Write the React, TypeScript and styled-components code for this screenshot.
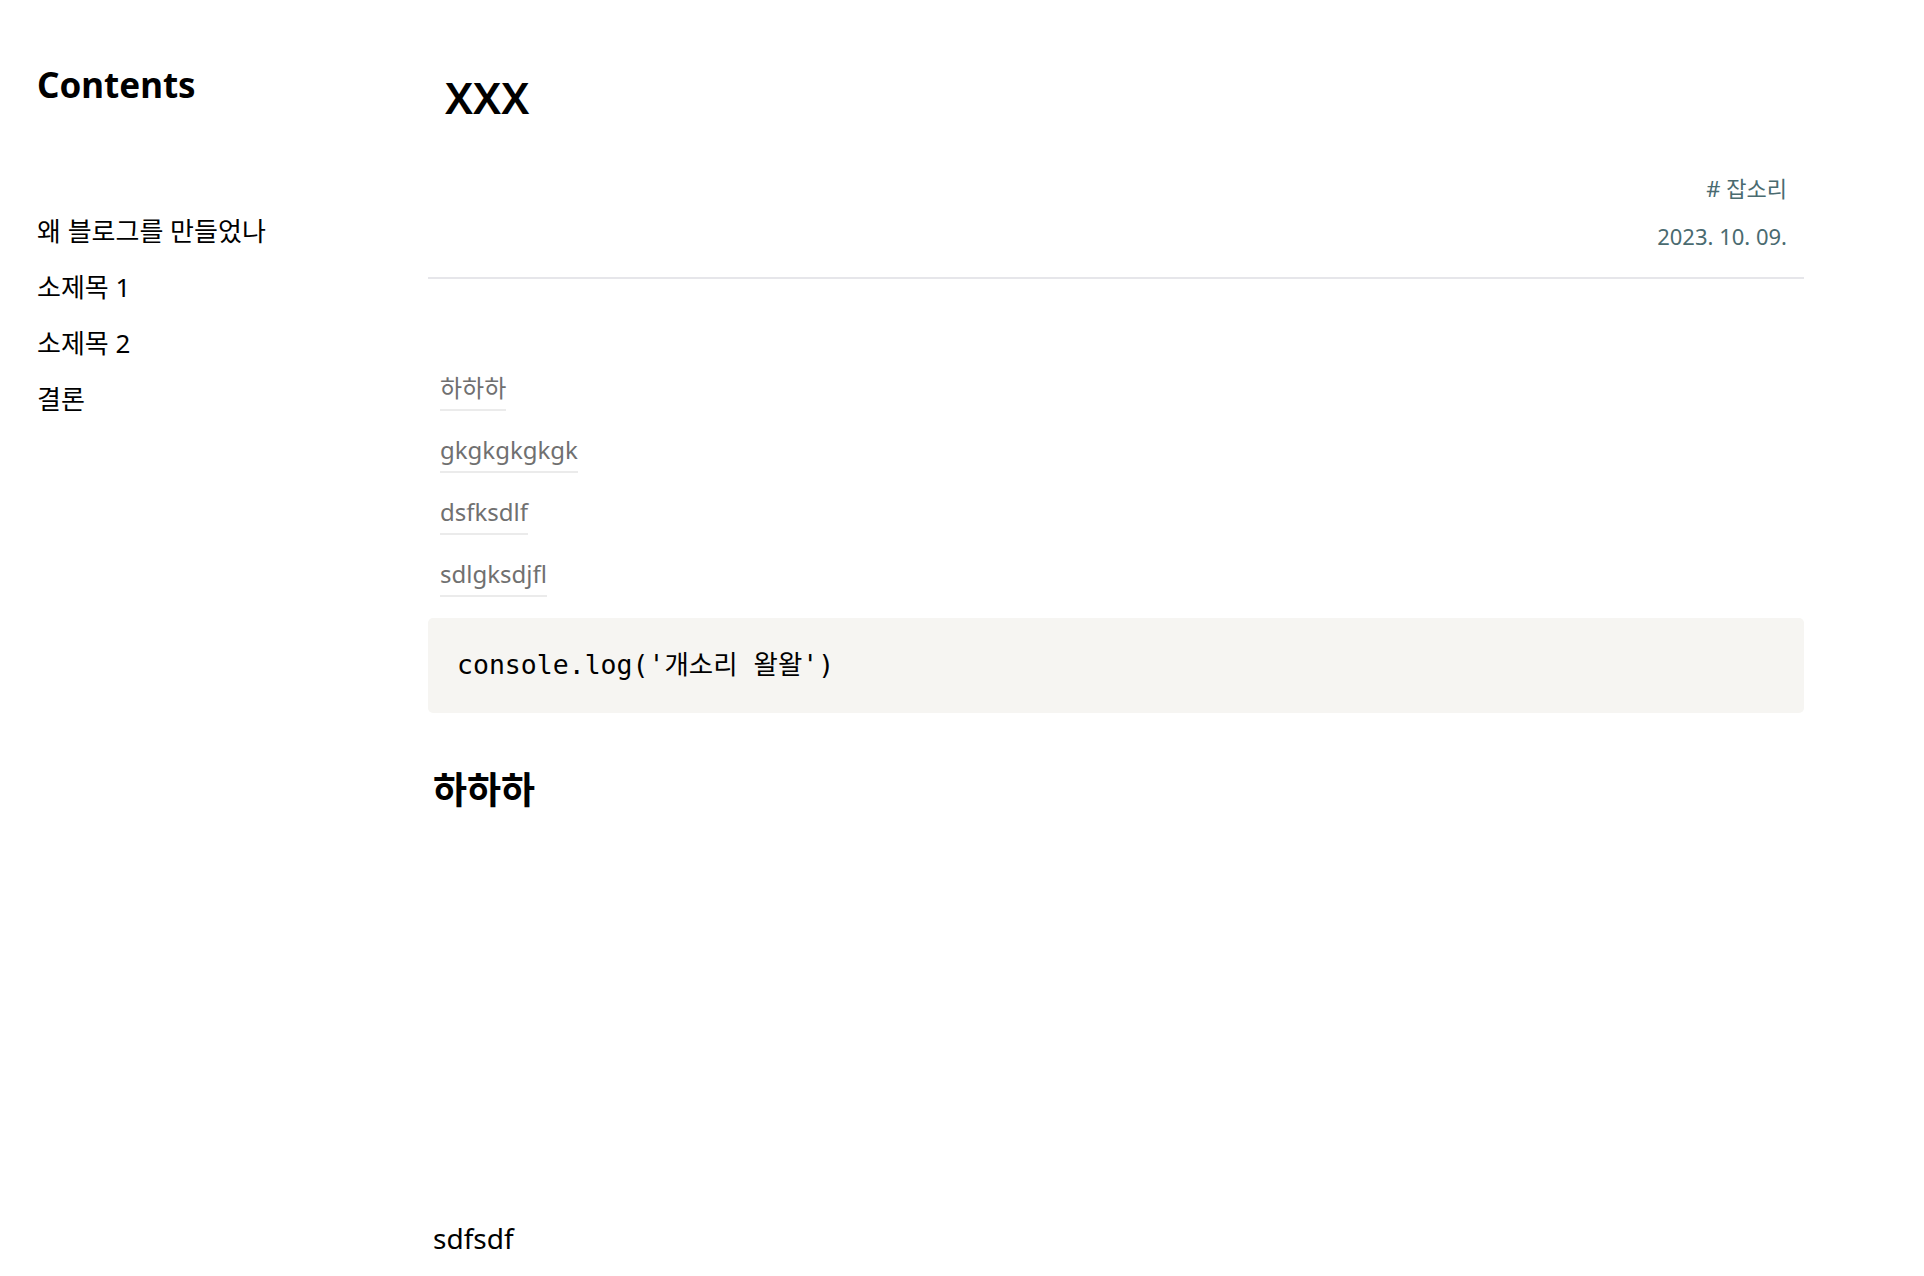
import React from "react";
import styled, { createGlobalStyle } from "styled-components";

const GlobalStyle = createGlobalStyle`
  html, body {
    margin: 0;
    padding: 0;
    background: #ffffff;
  }
  body {
    font-family: "Noto Sans", "Noto Sans CJK KR", sans-serif;
    color: #000000;
  }
  * { box-sizing: border-box; }
`;

const Page = styled.div`
  display: grid;
  grid-template-columns: 428px 1376px;
  min-height: 1276px;
`;

const Sidebar = styled.aside`
  padding: 61px 0 0 37px;
`;

const SidebarTitle = styled.h2`
  margin: 0;
  font-size: 35px;
  line-height: 48px;
  font-weight: 700;
`;

const TocList = styled.ul`
  list-style: none;
  margin: 94px 0 0;
  padding: 0;
`;

const TocItem = styled.li`
  font-size: 26px;
  line-height: 56px;
  color: #000;
`;

const Main = styled.main`
  padding-top: 71px;
`;

const Header = styled.header`
  padding: 0 17px 26px;
  border-bottom: 2px solid #e6e6ea;
`;

const Title = styled.h1`
  margin: 0;
  font-size: 44px;
  line-height: 53px;
  font-weight: 600;
`;

const Meta = styled.div`
  display: flex;
  flex-direction: column;
  align-items: flex-end;
  gap: 18px;
  margin-top: 49px;
  color: #4a6b70;
  font-size: 22px;
  line-height: 30px;
`;

const LinkList = styled.div`
  display: flex;
  flex-direction: column;
  align-items: flex-start;
  gap: 21px;
  margin-top: 91px;
  padding-left: 12px;
`;

const LinkItem = styled.span`
  display: inline-block;
  font-size: 24px;
  line-height: 36px;
  padding-bottom: 3px;
  color: #707070;
  border-bottom: 2px solid #ebebeb;
`;

const CodeBlock = styled.pre`
  margin: 21px 0 0;
  padding: 27px 29px 28px;
  background: #f6f5f2;
  border-radius: 5px;
  font-family: "DejaVu Sans Mono", "Noto Sans CJK KR", monospace;
  font-size: 26.5px;
  line-height: 40px;
  color: #000;
`;

const SectionHeading = styled.h2`
  margin: 53px 0 0;
  padding-left: 5px;
  font-size: 37px;
  line-height: 48px;
  font-weight: 700;
`;

const Paragraph = styled.p`
  margin: 404px 0 0;
  padding-left: 5px;
  font-size: 28px;
  line-height: 40px;
`;

const tocItems = ["왜 블로그를 만들었나", "소제목 1", "소제목 2", "결론"];
const links = ["하하하", "gkgkgkgkgk", "dsfksdlf", "sdlgksdjfl"];

export default function App() {
  return (
    <>
      <GlobalStyle />
      <Page>
        <Sidebar>
          <SidebarTitle>Contents</SidebarTitle>
          <TocList>
            {tocItems.map((t) => (
              <TocItem key={t}>{t}</TocItem>
            ))}
          </TocList>
        </Sidebar>
        <Main>
          <Header>
            <Title>XXX</Title>
            <Meta>
              <span># 잡소리</span>
              <span>2023. 10. 09.</span>
            </Meta>
          </Header>
          <LinkList>
            {links.map((l) => (
              <LinkItem key={l}>{l}</LinkItem>
            ))}
          </LinkList>
          <CodeBlock>console.log('개소리 왈왈')</CodeBlock>
          <SectionHeading>하하하</SectionHeading>
          <Paragraph>sdfsdf</Paragraph>
        </Main>
      </Page>
    </>
  );
}
